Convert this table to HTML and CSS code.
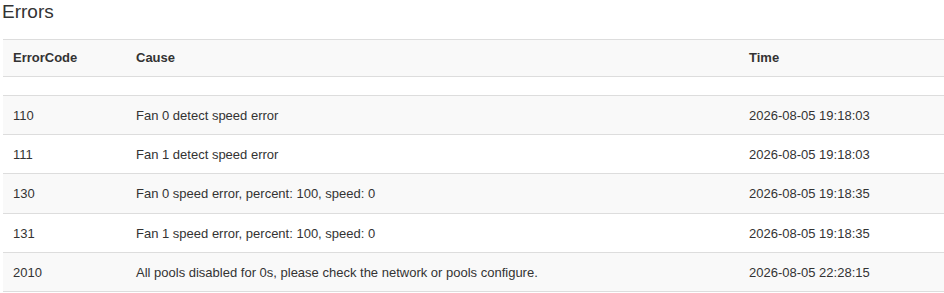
FILE: index.html
```html
<!DOCTYPE html>
<html>
<head>
<meta charset="utf-8">
<link rel="stylesheet" href="styles.css">
</head>
<body>
<div class="page">
  <h3 class="title">Errors</h3>
  <table class="errors">
    <colgroup>
      <col class="c-code">
      <col class="c-cause">
      <col class="c-time">
    </colgroup>
    <thead>
      <tr><th>ErrorCode</th><th>Cause</th><th>Time</th></tr>
    </thead>
    <tbody>
      <tr class="spacer"><td></td><td></td><td></td></tr>
      <tr class="stripe"><td>110</td><td>Fan 0 detect speed error</td><td>2026-08-05 19:18:03</td></tr>
      <tr><td>111</td><td>Fan 1 detect speed error</td><td>2026-08-05 19:18:03</td></tr>
      <tr class="stripe"><td>130</td><td>Fan 0 speed error, percent: 100, speed: 0</td><td>2026-08-05 19:18:35</td></tr>
      <tr><td>131</td><td>Fan 1 speed error, percent: 100, speed: 0</td><td>2026-08-05 19:18:35</td></tr>
      <tr class="stripe"><td>2010</td><td>All pools disabled for 0s, please check the network or pools configure.</td><td>2026-08-05 22:28:15</td></tr>
    </tbody>
  </table>
</div>
</body>
</html>
```
FILE: styles.css
```css
html, body {
  margin: 0;
  padding: 0;
  background: #fff;
}
body {
  font-family: "Liberation Sans", Arial, sans-serif;
  color: #333;
  font-size: 13px;
}
.page {
  padding-left: 3px;
}
.title {
  margin: 0 0 16px -1px;
  padding-top: 1px;
  font-size: 19px;
  font-weight: normal;
  line-height: 22px;
  color: #333;
}
.errors {
  width: 941px;
  border-collapse: collapse;
  table-layout: fixed;
}
.c-code { width: 123px; }
.c-time { width: 205px; }
.errors th {
  text-align: left;
  font-weight: bold;
  padding: 8px 10px;
  line-height: 20px;
  background: #f9f9f9;
  border-top: 1px solid #ddd;
  border-bottom: 1px solid #ddd;
}
.errors td {
  padding: 9px 10px 7px;
  line-height: 22.2px;
  border-bottom: 1px solid #ddd;
  white-space: nowrap;
}
.errors .spacer td {
  padding: 0;
  height: 18px;
  line-height: 18px;
}
.errors .stripe td {
  background: #f9f9f9;
}
```
